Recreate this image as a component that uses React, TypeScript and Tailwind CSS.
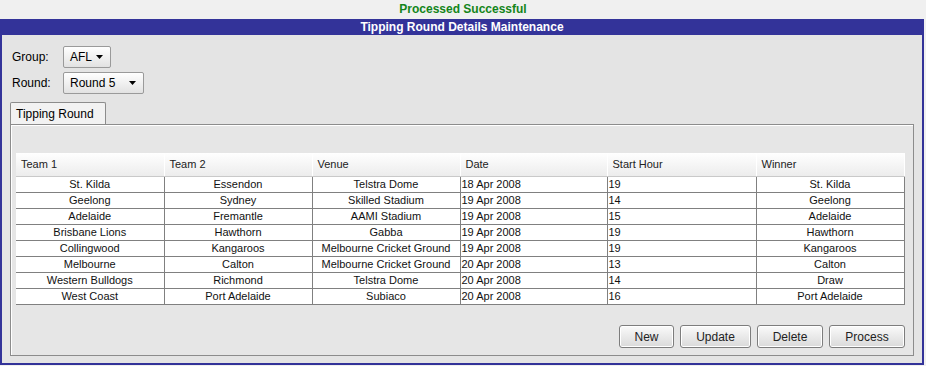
const rows = [
  ["St. Kilda", "Essendon", "Telstra Dome", "18 Apr 2008", "19", "St. Kilda"],
  ["Geelong", "Sydney", "Skilled Stadium", "19 Apr 2008", "14", "Geelong"],
  ["Adelaide", "Fremantle", "AAMI Stadium", "19 Apr 2008", "15", "Adelaide"],
  ["Brisbane Lions", "Hawthorn", "Gabba", "19 Apr 2008", "19", "Hawthorn"],
  ["Collingwood", "Kangaroos", "Melbourne Cricket Ground", "19 Apr 2008", "19", "Kangaroos"],
  ["Melbourne", "Calton", "Melbourne Cricket Ground", "20 Apr 2008", "13", "Calton"],
  ["Western Bulldogs", "Richmond", "Telstra Dome", "20 Apr 2008", "14", "Draw"],
  ["West Coast", "Port Adelaide", "Subiaco", "20 Apr 2008", "16", "Port Adelaide"],
];

const headers = ["Team 1", "Team 2", "Venue", "Date", "Start Hour", "Winner"];
const widths = ["w-[148px]", "w-[148px]", "w-[148px]", "w-[147px]", "w-[149px]", "w-[148px]"];

function Caret() {
  return (
    <svg width="7" height="4" viewBox="0 0 7 4" className="shrink-0">
      <path d="M0 0 H7 L3.5 4 Z" fill="#000" />
    </svg>
  );
}

function Combo({ label, width }: { label: string; width: string }) {
  return (
    <div
      className={`${width} h-[22px] flex items-center justify-between pl-[6px] pr-[7px] border border-[#9a9a9a] rounded-[2px] bg-gradient-to-b from-white to-[#e2e2e2] text-[12px] text-black`}
    >
      <span>{label}</span>
      <Caret />
    </div>
  );
}

function Btn({ children, width }: { children: string; width: string }) {
  return (
    <button
      className={`${width} h-[23px] border border-[#7d7d7d] rounded-[3px] bg-gradient-to-b from-[#fafafa] to-[#dadada] text-[12px] text-[#222] shadow-[inset_0_0_0_1px_#ffffff]`}
    >
      {children}
    </button>
  );
}

export default function App() {
  return (
    <div className="w-[926px] h-[366px] bg-[#f0f0f0] overflow-hidden" style={{ fontFamily: '"Liberation Sans", Arial, sans-serif' }}>
      <div className="h-[19px] leading-[19px] text-center text-[12px] font-bold text-[#14851a]">
        Processed Successful
      </div>
      <div className="w-[924px] h-[346px] border-x-2 border-b-2 border-[#333399] bg-[#e4e4e4] flex flex-col">
        <div className="h-[16px] leading-[16px] bg-[#333399] text-white text-center text-[12px] font-bold">
          Tipping Round Details Maintenance
        </div>
        <div className="pl-[10px] pt-[11px] flex flex-col gap-[4px]">
          <div className="flex items-center">
            <span className="w-[51px] text-[12px] text-black">Group:</span>
            <Combo label="AFL" width="w-[48px]" />
          </div>
          <div className="flex items-center">
            <span className="w-[51px] text-[12px] text-black">Round:</span>
            <Combo label="Round 5" width="w-[81px]" />
          </div>
        </div>
        <div className="pl-[8px] pt-[8px]">
          <div className="w-[96px] h-[22px] border border-b-0 border-[#8c8c8c] rounded-t-[2px] bg-[#f2f2f2] flex items-center pl-[5px] text-[12px] text-black">
            Tipping Round
          </div>
          <div className="w-[904px] h-[232px] border border-[#8c8c8c] shadow-[inset_1px_1px_0_#ffffff] bg-[#e6e6e6] flex flex-col pl-[5px] pr-[8px] pt-[28px]">
            <table className="w-[888px] border-collapse table-fixed text-[11px] text-[#111]">
              <thead>
                <tr className="h-[23px] bg-gradient-to-b from-white to-[#ececec]">
                  {headers.map((h, i) => (
                    <th
                      key={h}
                      className={`${widths[i]} text-left font-normal text-[#222] pl-[5px] border-r border-white border-b border-b-[#c9c9c9]`}
                    >
                      {h}
                    </th>
                  ))}
                </tr>
              </thead>
              <tbody className="bg-white">
                {rows.map((r, ri) => (
                  <tr key={ri} className="h-[16px]">
                    {r.map((c, ci) => (
                      <td
                        key={ci}
                        className={`p-0 leading-[15px] border-b border-r border-[#808080] ${
                          ci === 3 || ci === 4 ? "text-left pl-[1px]" : "text-center"
                        }`}
                      >
                        {c}
                      </td>
                    ))}
                  </tr>
                ))}
              </tbody>
            </table>
            <div className="mt-auto mb-[7px] flex justify-end gap-[6px]">
              <Btn width="w-[55px]">New</Btn>
              <Btn width="w-[71px]">Update</Btn>
              <Btn width="w-[66px]">Delete</Btn>
              <Btn width="w-[76px]">Process</Btn>
            </div>
          </div>
        </div>
      </div>
    </div>
  );
}
